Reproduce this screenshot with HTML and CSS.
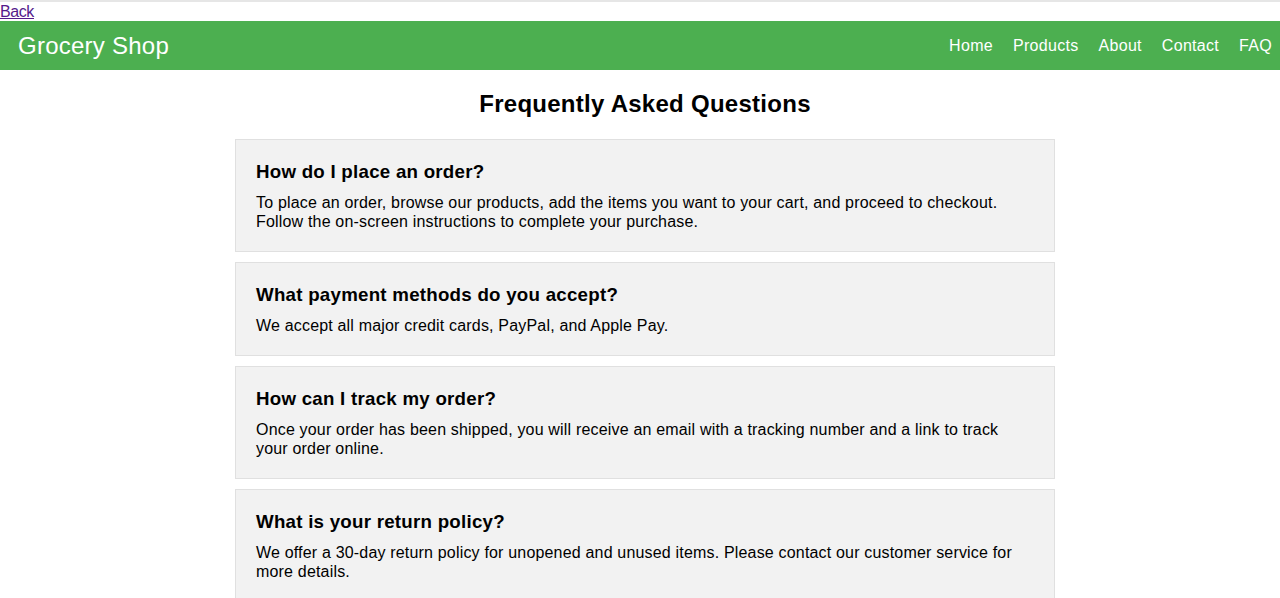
FILE: index.html
```html
<!DOCTYPE html>
<html lang="en">
<head>
<meta charset="utf-8">
<title>FAQ - Grocery Shop</title>
<link rel="stylesheet" href="styles.css">
</head>
<body>
<div class="topline"></div>
<a class="back" href="#">Back</a>
<header class="site-header">
  <div class="logo">Grocery Shop</div>
  <nav class="nav">
    <a href="#">Home</a>
    <a href="#">Products</a>
    <a href="#">About</a>
    <a href="#">Contact</a>
    <a href="#">FAQ</a>
  </nav>
</header>
<main class="faq">
  <h2 class="faq-title">Frequently Asked Questions</h2>
  <section class="card">
    <h3>How do I place an order?</h3>
    <p>To place an order, browse our products, add the items you want to your cart, and proceed to checkout. Follow the on-screen instructions to complete your purchase.</p>
  </section>
  <section class="card">
    <h3>What payment methods do you accept?</h3>
    <p>We accept all major credit cards, PayPal, and Apple Pay.</p>
  </section>
  <section class="card">
    <h3>How can I track my order?</h3>
    <p>Once your order has been shipped, you will receive an email with a tracking number and a link to track your order online.</p>
  </section>
  <section class="card">
    <h3>What is your return policy?</h3>
    <p>We offer a 30-day return policy for unopened and unused items. Please contact our customer service for more details.</p>
  </section>
</main>
</body>
</html>
```
FILE: styles.css
```css
html, body {
  margin: 0;
  padding: 0;
}
body {
  font-family: "Liberation Sans", Arial, sans-serif;
  color: #000;
  background: #fff;
}
.topline {
  height: 2px;
  background: #e6e6e6;
}
.back {
  display: block;
  width: max-content;
  font-size: 16px;
  line-height: 19px;
  letter-spacing: -0.4px;
  color: #551a8b;
  text-decoration: underline;
}
.site-header {
  height: 49px;
  background: #4caf50;
  display: flex;
  align-items: center;
  justify-content: space-between;
  padding: 0 8px 0 18px;
  color: #fff;
}
.logo {
  font-size: 24px;
  letter-spacing: 0.25px;
}
.nav {
  display: flex;
  gap: 20px;
}
.nav a {
  color: #fff;
  text-decoration: none;
  font-size: 16px;
  letter-spacing: 0.3px;
}
.faq {
  display: flex;
  flex-direction: column;
  align-items: center;
  padding-left: 10px;
}
.faq-title {
  font-size: 24px;
  margin: 20px 0 21px;
  line-height: 28px;
  letter-spacing: 0.27px;
}
.card {
  width: 778px;
  background: #f2f2f2;
  border: 1px solid #e0e0e0;
  padding: 21px 20px 20px;
  margin-bottom: 10px;
}
.card h3 {
  margin: 0 0 10px;
  font-size: 18.72px;
  line-height: 22px;
  letter-spacing: 0.25px;
}
.card p {
  margin: 0;
  font-size: 16px;
  line-height: 19px;
  letter-spacing: 0.18px;
}
```
